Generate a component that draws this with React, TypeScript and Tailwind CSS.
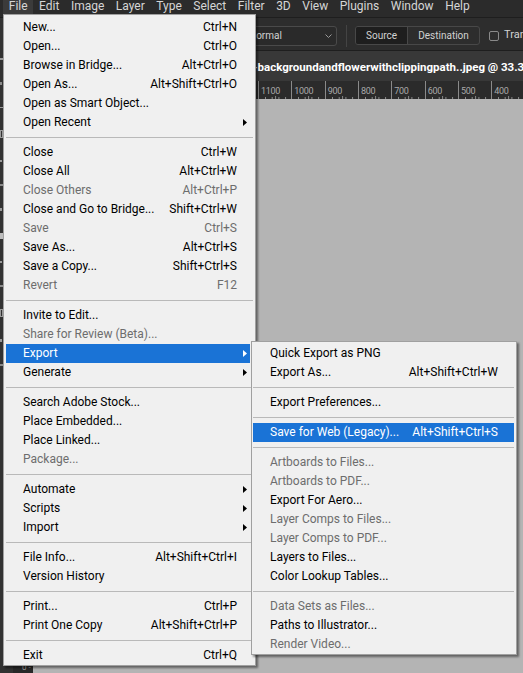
import React from "react";

type It = { l: string; s?: string; d?: boolean; sub?: boolean; a?: boolean };

const mainGroups: It[][] = [
  [
    { l: "New...", s: "Ctrl+N" },
    { l: "Open...", s: "Ctrl+O" },
    { l: "Browse in Bridge...", s: "Alt+Ctrl+O" },
    { l: "Open As...", s: "Alt+Shift+Ctrl+O" },
    { l: "Open as Smart Object..." },
    { l: "Open Recent", sub: true },
  ],
  [
    { l: "Close", s: "Ctrl+W" },
    { l: "Close All", s: "Alt+Ctrl+W" },
    { l: "Close Others", s: "Alt+Ctrl+P", d: true },
    { l: "Close and Go to Bridge...", s: "Shift+Ctrl+W" },
    { l: "Save", s: "Ctrl+S", d: true },
    { l: "Save As...", s: "Alt+Ctrl+S" },
    { l: "Save a Copy...", s: "Shift+Ctrl+S" },
    { l: "Revert", s: "F12", d: true },
  ],
  [
    { l: "Invite to Edit..." },
    { l: "Share for Review (Beta)...", d: true },
    { l: "Export", sub: true, a: true },
    { l: "Generate", sub: true },
  ],
  [
    { l: "Search Adobe Stock..." },
    { l: "Place Embedded..." },
    { l: "Place Linked..." },
    { l: "Package...", d: true },
  ],
  [
    { l: "Automate", sub: true },
    { l: "Scripts", sub: true },
    { l: "Import", sub: true },
  ],
  [{ l: "File Info...", s: "Alt+Shift+Ctrl+I" }, { l: "Version History" }],
  [{ l: "Print...", s: "Ctrl+P" }, { l: "Print One Copy", s: "Alt+Shift+Ctrl+P" }],
  [{ l: "Exit", s: "Ctrl+Q" }],
];

const subGroups: It[][] = [
  [{ l: "Quick Export as PNG" }, { l: "Export As...", s: "Alt+Shift+Ctrl+W" }],
  [{ l: "Export Preferences..." }],
  [{ l: "Save for Web (Legacy)...", s: "Alt+Shift+Ctrl+S", a: true }],
  [
    { l: "Artboards to Files...", d: true },
    { l: "Artboards to PDF...", d: true },
    { l: "Export For Aero..." },
    { l: "Layer Comps to Files...", d: true },
    { l: "Layer Comps to PDF...", d: true },
    { l: "Layers to Files..." },
    { l: "Color Lookup Tables..." },
  ],
  [
    { l: "Data Sets as Files...", d: true },
    { l: "Paths to Illustrator..." },
    { l: "Render Video...", d: true },
  ],
];

const menuBar = ["File", "Edit", "Image", "Layer", "Type", "Select", "Filter", "3D", "View", "Plugins", "Window", "Help"];

function Arrow() {
  return (
    <svg width="4" height="7" viewBox="0 0 4 7" className="block">
      <path d="M0 0L4 3.5L0 7Z" fill="currentColor" />
    </svg>
  );
}

function MainItem({ it }: { it: It }) {
  const color = it.a ? "bg-[#1a73d6] text-white" : it.d ? "text-[#6d6d6d]" : "text-black";
  return (
    <div className={`flex items-center h-[19px] ml-[2px] mr-[5px] pl-[17px] ${color}`}>
      <span className="flex-1 whitespace-nowrap">{it.l}</span>
      {it.s && <span className="whitespace-nowrap">{it.s}</span>}
      <span className="w-[13px] flex items-center pl-[6px]">{it.sub && <Arrow />}</span>
    </div>
  );
}

function SubItem({ it }: { it: It }) {
  const color = it.a ? "bg-[#1a73d6] text-white" : it.d ? "text-[#6d6d6d]" : "text-black";
  return (
    <div className={`flex items-center h-[19px] ml-[1px] mr-[2px] pl-[17px] pr-[16px] ${color}`}>
      <span className="flex-1 whitespace-nowrap">{it.l}</span>
      {it.s && <span className="whitespace-nowrap">{it.s}</span>}
    </div>
  );
}

function Sep({ sub }: { sub?: boolean }) {
  return (
    <div className={sub ? "h-[11px] flex items-center ml-[1px] mr-[2px]" : "h-[11px] flex items-center ml-[2px] mr-[2px]"}>
      <div className="h-px w-full bg-[#b9b9b9]" />
    </div>
  );
}

const rulerNums = ["1100", "1000", "900", "800", "700", "600", "500", "400", "300"];

function RulerCell({ n }: { n: string }) {
  return (
    <div className="w-[33.33px] shrink-0 h-full border-l border-[#8a8a8a] flex flex-col">
      <span className="text-[9px] leading-[9px] tracking-[-0.3px] text-[#a9a9a9] pl-[2px] mt-[6px]">{n}</span>
      <svg width="33" height="3" viewBox="0 0 33 3" className="mt-auto block">
        <path d="M6.5 1V3M13.2 1V3M19.9 1V3M26.6 1V3M16.6 0V3" stroke="#8a8a8a" strokeWidth="1" />
      </svg>
    </div>
  );
}

export default function App() {
  return (
    <div className="relative w-[523px] h-[673px] overflow-hidden bg-[#b4b4b4] font-['Roboto',sans-serif]">
      {/* menu bar */}
      <div className="h-[18px] bg-[#2b2b2b] border-b border-[#1e1e1e] flex items-start pl-[3px]">
        {menuBar.map((m, i) => (
          <span
            key={m}
            className={
              i === 0
                ? "h-[14px] px-[5.75px] leading-[13px] text-[12px] text-[#d6d6d6] bg-[#3b3b3b]"
                : "h-[14px] px-[5.75px] leading-[13px] text-[12px] text-[#d6d6d6]"
            }
          >
            {m}
          </span>
        ))}
      </div>

      <div className="flex h-[655px]">
        {/* tools panel */}
        <div className="w-[13px] bg-[#323232] flex flex-col gap-[22px] pt-[40px] items-start">
          <span className="w-[3px] h-[2px] bg-[#9a9a9a]" />
          <span className="w-[2px] h-[3px] bg-[#8a8a8a]" />
          <span className="w-[3px] h-[1px] bg-[#9a9a9a]" />
          <span className="w-[3px] h-[8px] border border-[#9a9a9a]" />
          <span className="w-[2px] h-[2px] bg-[#9a9a9a]" />
          <span className="w-[3px] h-[2px] bg-[#8a8a8a]" />
          <span className="w-[2px] h-[3px] bg-[#9a9a9a]" />
          <span className="w-[3px] h-[6px] bg-[#bdbdbd]" />
          <span className="w-[2px] h-[2px] bg-[#9a9a9a]" />
          <span className="w-[3px] h-[2px] bg-[#8a8a8a]" />
          <span className="w-[3px] h-[8px] border border-[#9a9a9a]" />
          <span className="w-[2px] h-[3px] bg-[#9a9a9a]" />
          <span className="w-[3px] h-[2px] bg-[#8a8a8a]" />
        </div>
        {/* vertical ruler */}
        <div className="w-[20px] bg-[#282828] flex flex-col justify-end">
          <span className="text-[8px] leading-[8px] text-[#a9a9a9] pl-[9px] mb-[1px]">0 -</span>
        </div>
        <div className="flex-1 flex flex-col min-w-0">
          {/* options bar */}
          <div className="h-[33px] shrink-0 bg-[#2d2d2d] border-b border-[#1e1e1e] flex items-center pt-[3px] text-[10px] text-[#d2d2d2]">
            <div className="ml-[207px] w-[97px] h-[20px] shrink-0 rounded-[3px] border border-[#4a4a4a] bg-[#2a2a2a] flex items-center pl-[8px] pr-[4px]">
              <span className="flex-1">Normal</span>
              <svg width="7" height="4" viewBox="0 0 7 4" className="block">
                <path d="M0.5 0.5L3.5 3.5L6.5 0.5" stroke="#9a9a9a" fill="none" />
              </svg>
            </div>
            <div className="ml-[9px] w-px h-[22px] bg-[#444444] shrink-0" />
            <div className="ml-[8px] h-[19px] shrink-0 flex rounded-[3px] border border-[#484848] overflow-hidden">
              <span className="w-[51px] bg-[#1e1e1e] flex items-center justify-center">Source</span>
              <span className="w-[72px] border-l border-[#484848] flex items-center justify-center">Destination</span>
            </div>
            <div className="ml-[9px] w-[10px] h-[10px] shrink-0 rounded-[2px] border border-[#8a8a8a]" />
            <span className="ml-[5px] text-[11px] whitespace-nowrap">Transparent</span>
          </div>
          {/* tab row */}
          <div className="h-[30px] shrink-0 bg-[#383838] flex items-center pt-[3px] overflow-hidden">
            <span className="ml-[220px] text-[11.5px] font-bold text-white whitespace-nowrap">
              -backgroundandflowerwithclippingpath..jpeg @ 33.3% (RGB/8#)
            </span>
          </div>
          {/* ruler */}
          <div className="h-[18px] shrink-0 bg-[#2b2b2b] flex pl-[225px] overflow-hidden">
            {rulerNums.map((n) => (
              <RulerCell key={n} n={n} />
            ))}
          </div>
          <div className="flex-1 bg-[#b4b4b4]" />
        </div>
      </div>

      {/* File menu */}
      <div className="absolute left-[3px] top-[14px] w-[253px] bg-[#f0f0f0] border border-[#a0a0a0] pt-[2.5px] pb-[0.5px] text-[12px] shadow-[2px_2px_2px_rgba(0,0,0,0.45)]">
        {mainGroups.map((g, gi) => (
          <React.Fragment key={gi}>
            {gi > 0 && <Sep />}
            {g.map((it) => (
              <MainItem key={it.l} it={it} />
            ))}
          </React.Fragment>
        ))}
      </div>

      {/* Export submenu */}
      <div className="absolute left-[251px] top-[341px] w-[266px] bg-[#f0f0f0] border border-[#a0a0a0] pt-[1.5px] pb-[0.5px] text-[12px] shadow-[2px_2px_2px_rgba(0,0,0,0.45)]">
        {subGroups.map((g, gi) => (
          <React.Fragment key={gi}>
            {gi > 0 && <Sep sub />}
            {g.map((it) => (
              <SubItem key={it.l} it={it} />
            ))}
          </React.Fragment>
        ))}
      </div>
    </div>
  );
}
